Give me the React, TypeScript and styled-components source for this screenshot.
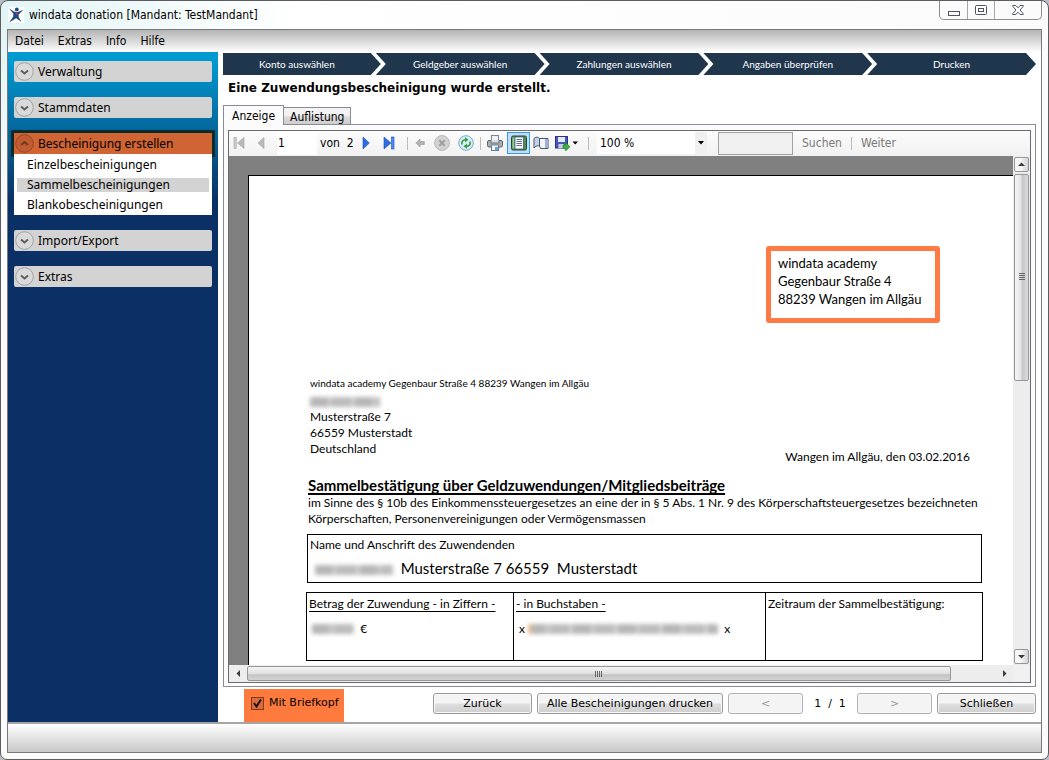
import React from "react";
import styled, { createGlobalStyle, css } from "styled-components";

const UI = '"DejaVu Sans Condensed", "DejaVu Sans", sans-serif';
const FORM = '"DejaVu Sans", sans-serif';
const DOC = 'Lato, "Open Sans", sans-serif';
const NAV = '"Noto Sans", "Open Sans", sans-serif';

const GlobalStyle = createGlobalStyle`
  *, *::before, *::after { box-sizing: border-box; }
  body { margin: 0; background: #b9bcc4; color: #000; }
  button, input, select { font: inherit; color: inherit; margin: 0; padding: 0; border: 0; background: none; border-radius: 0; }
  h1, h2, p, ul { margin: 0; padding: 0; }
  ul { list-style: none; }
  svg { display: block; flex: none; }
`;

const Window = styled.div`
  display: flex;
  flex-direction: column;
  height: 100vh;
  min-height: 480px;
  padding: 0 6px 6px;
  border: 1px solid #5c5c60;
  border-radius: 8px 8px 7px 7px;
  background:
    linear-gradient(transparent 28px, #fbfbfb 220px),
    linear-gradient(90deg, #e2f5f5 0, #f4fbfb 180px, #fff 300px, #fbfbfb 100%);
  font: 12px/16px ${UI};
`;

const TitleBar = styled.header`
  display: flex;
  align-items: flex-start;
  height: 28px;
  flex: none;
`;

const TitleLabel = styled.div`
  display: flex;
  align-items: center;
  gap: 5px;
  flex: 1;
  height: 27px;
  padding-left: 1px;
`;

const WindowButtons = styled.div`
  display: flex;
  height: 19px;
  border: 1px solid #8b8b90;
  border-top: 0;
  border-radius: 0 0 5px 5px;
`;

const WindowButton = styled.button<{ $wide?: boolean }>`
  display: flex;
  align-items: center;
  justify-content: center;
  width: ${(p) => (p.$wide ? 47 : 27)}px;
  & + & { border-left: 1px solid #a5a5aa; }
`;

const Client = styled.div`
  display: flex;
  flex-direction: column;
  flex: 1;
  min-height: 0;
  border: 1px solid #77797b;
  background: #fff;
`;

const MenuBar = styled.nav`
  display: flex;
  align-items: center;
  gap: 14px;
  height: 22px;
  flex: none;
  padding-left: 7px;
  background: linear-gradient(#b4b4b4, #dcdcdc 55%, #fff);
`;

const MenuItem = styled.button``;

const Body = styled.div`
  display: flex;
  flex: 1;
  min-height: 0;
`;

const Sidebar = styled.aside`
  display: flex;
  flex-direction: column;
  gap: 15px;
  width: 210px;
  flex: none;
  padding: 9px 6px;
  background: linear-gradient(#0099d0 0, #0099d0 10px, #0a3066 150px);
  font: 12px/20px ${NAV};
`;

const GroupHeader = styled.button<{ $open?: boolean }>`
  display: flex;
  align-items: center;
  gap: 4px;
  width: 100%;
  height: 21px;
  padding-left: 1px;
  border-radius: 2px;
  background: #d3d3d3;
  text-align: left;
  ${(p) =>
    p.$open &&
    css`
      background: #d06433;
      border-radius: 0;
      box-shadow: 0 0 0 3px #0b2a2a;
    `}
`;

const GroupList = styled.ul`
  position: relative;
  padding: 1px 3px 0;
  background: #fff;
`;

const GroupItem = styled.li`
  display: flex;
  align-items: center;
  height: 20px;
`;

const GroupLink = styled.a<{ $active?: boolean }>`
  flex: 1;
  padding-left: 10px;
  line-height: 14px;
  color: #000;
  text-decoration: none;
  background: ${(p) => (p.$active ? "#d3d3d3" : "none")};
`;

const Main = styled.main`
  display: flex;
  flex-direction: column;
  flex: 1;
  min-width: 0;
  padding: 0 5px;
`;

const Steps = styled.ol`
  display: flex;
  flex: none;
  margin: 1px 0 0;
  padding: 0;
  list-style: none;
  font: 10px/22px ${DOC};
`;

const Step = styled.li`
  flex: 1 1 21px;
  background: #1f364c;
  color: #fff;
  text-align: center;
  clip-path: polygon(0 0, calc(100% - 10px) 0, 100% 50%, calc(100% - 10px) 100%, 0 100%, 10px 50%);
  &:first-child {
    flex-basis: 10px;
    padding-right: 10px;
    clip-path: polygon(0 0, calc(100% - 10px) 0, 100% 50%, calc(100% - 10px) 100%, 0 100%);
  }
  & + & { margin-left: -5px; }
`;

const Message = styled.h1`
  flex: none;
  padding: 3px 5px 7px;
  font: bold 12px/20px ${FORM};
`;

const Tabs = styled.div`
  display: flex;
  align-items: flex-end;
  height: 19px;
  flex: none;
`;

const Tab = styled.button<{ $active?: boolean }>`
  height: 17px;
  padding: 2px 6px 0;
  border: 1px solid #898c95;
  border-bottom: 0;
  line-height: 14px;
  background: linear-gradient(#f3f3f3 45%, #dcdcdc 55%, #cdcdcd);
  ${(p) =>
    p.$active
      ? css`
          position: relative;
          height: 20px;
          padding: 0 8px;
          margin-bottom: -1px;
          background: #fbfbfb;
        `
      : css`border-left: 0;`}
`;

const TabPanel = styled.section`
  display: flex;
  flex: 1;
  min-height: 0;
  padding: 5px 4px 3px;
  border: 1px solid #898c95;
  background: #fbfbfb;
`;

const Viewer = styled.div`
  display: flex;
  flex-direction: column;
  flex: 1;
  min-width: 0;
  border: 1px solid #6b6b6b;
`;

const Toolbar = styled.div`
  display: flex;
  align-items: center;
  height: 25px;
  padding-bottom: 1px;
  flex: none;
  background: linear-gradient(#fcfcfc, #f1f1f1);
`;

const Tool = styled.button<{ $w: number; $active?: boolean }>`
  display: flex;
  align-items: center;
  justify-content: center;
  width: ${(p) => p.$w}px;
  height: 22px;
  flex: none;
  ${(p) =>
    p.$active &&
    css`
      margin-left: 4px;
      border: 1px solid #3399ff;
      background: #c3defa;
    `}
`;

const Separator = styled.span`
  width: 1px;
  height: 13px;
  margin: 0 6px;
  flex: none;
  background: #bcbcbc;
`;

const PageInput = styled.input`
  width: 40px;
  height: 23px;
  margin-left: 4px;
  padding-left: 1px;
  background: #fff;
`;

const PageCount = styled.span`
  width: 38px;
  padding-left: 3px;
  white-space: pre;
`;

const ZoomBox = styled.div`
  display: flex;
  position: relative;
  width: 110px;
  height: 22px;
  margin-left: 2px;
  background: linear-gradient(90deg, #fff 98px, #f0f0f0 98px);
`;

const ZoomSelect = styled.select`
  appearance: none;
  width: 100%;
  padding-left: 3px;
`;

const ZoomArrow = styled.svg`
  position: absolute;
  right: 3px;
  top: 9px;
  pointer-events: none;
`;

const SearchInput = styled.input`
  width: 75px;
  height: 23px;
  margin-left: 11px;
  padding: 0 4px;
  border: 1px solid #a2a2a2;
  background: #f0f0f0;
`;

const SearchButton = styled.button`
  margin: 0 3px 0 9px;
  color: #7a7a7a;
  & + span + & { margin-left: 3px; }
`;

const Scroller = styled.div`
  display: grid;
  grid-template: minmax(0, 1fr) 17px / minmax(0, 1fr) 17px;
  flex: 1;
  min-height: 0;
  background: #f0f0f0;
`;

const Viewport = styled.div`
  overflow: hidden;
  padding: 19px 0 0 19px;
  background: #808080;
`;

const VTrack = styled.div`
  display: flex;
  flex-direction: column;
  padding: 1px;
  gap: 2px;
  background: #ededed;
`;

const HTrack = styled.div`
  display: flex;
  padding: 1px 0;
  background: #ededed;
`;

const ScrollButton = styled.button<{ $flat?: boolean }>`
  display: flex;
  align-items: center;
  justify-content: center;
  width: ${(p) => (p.$flat ? 18 : 15)}px;
  height: 15px;
  flex: none;
  border: ${(p) => (p.$flat ? "0" : "1px solid #979797")};
  border-radius: 2px;
  background: ${(p) => (p.$flat ? "#ededed" : "linear-gradient(90deg, #f6f6f6 45%, #d2d2d6)")};
`;

const VThumb = styled.div`
  display: flex;
  align-items: center;
  justify-content: center;
  flex: 206;
  border: 1px solid #979797;
  border-radius: 2px;
  background: linear-gradient(90deg, #f5f5f5 0, #e4e4e6 45%, #c6c6ca 55%, #dcdcde);
`;

const HThumb = styled.div`
  display: flex;
  align-items: center;
  justify-content: center;
  flex: 704;
  border: 1px solid #979797;
  border-radius: 2px;
  background: linear-gradient(#f5f5f5 0, #e0e0e0 50%, #c4c4c4 60%, #d2d2d2);
`;

const Rest = styled.div<{ $grow: number }>`
  flex: ${(p) => p.$grow};
`;

const Paper = styled.article`
  width: 794px;
  min-height: 1123px;
  padding: 70px 59px 60px 57px;
  border: 1px solid #000;
  border-right: 0;
  background: #fff;
  font: 12px/16px ${DOC};
`;

const Letterhead = styled.address`
  width: 174px;
  height: 77px;
  margin: 0 43px 52px auto;
  padding: 3px 0 0 7px;
  border: 5px solid #ff7b43;
  border-radius: 3px;
  font: normal 13px/18px ${DOC};
  white-space: nowrap;
`;

const AddressRow = styled.div`
  display: flex;
  align-items: flex-end;
  justify-content: space-between;
  padding: 0 13px 0 4px;
`;

const Recipient = styled.div`
  padding-bottom: 8px;
`;

const SenderLine = styled.p`
  margin-bottom: 2px;
  font-size: 10px;
`;

const Line = styled.p<{ $indent?: boolean; $big?: boolean }>`
  white-space: pre;
  ${(p) => p.$indent && css`padding-left: 2px;`}
  ${(p) => p.$big && css`font-size: 15px; line-height: 20px;`}
`;

const Redacted = styled.span<{ $w: number; $warm?: boolean }>`
  display: inline-block;
  width: ${(p) => p.$w}px;
  height: 10px;
  vertical-align: middle;
  background: repeating-linear-gradient(90deg, #b6b6b6 0 17px, #c8c8c8 17px 22px, #bcbcbc 22px 41px, #d0d0d0 41px 45px);
  ${(p) => p.$warm && css`box-shadow: inset 3px 0 0 #f5bd7c;`}
  filter: blur(2px);
`;

const DocTitle = styled.h2`
  margin-top: 10px;
  padding-left: 2px;
  font: bold 15px/20px ${DOC};
  text-decoration: underline;
  text-decoration-thickness: 2px;
  text-underline-offset: 2px;
  text-decoration-skip-ink: none;
`;

const NameBox = styled.div`
  height: 49px;
  margin: 7px 1px 9px;
  padding: 2px;
  border: 1px solid #000;
`;

const NameLine = styled(Line)`
  padding: 5px 0 0 5px;
`;

const Amounts = styled.table`
  width: 100%;
  table-layout: fixed;
  border-collapse: collapse;
  font-size: 12px;
`;

const AmountHead = styled.th<{ $plain?: boolean; $w?: number }>`
  width: ${(p) => (p.$w ? `${p.$w}px` : "auto")};
  height: 22px;
  padding: 0 0 0 2px;
  border: 1px solid #000;
  border-bottom: 0;
  font-weight: normal;
  text-align: left;
  text-decoration: ${(p) => (p.$plain ? "none" : "underline")};
  text-underline-offset: 3px;
  text-decoration-skip-ink: none;
  white-space: nowrap;
`;

const AmountCell = styled.td`
  height: 46px;
  padding: 6px 5px 0;
  border: 1px solid #000;
  border-top: 0;
  vertical-align: top;
  white-space: pre;
`;

const Footer = styled.footer`
  display: flex;
  align-items: center;
  gap: 5px;
  height: 35px;
  flex: none;
  font: 11px/16px ${FORM};
`;

const CheckLabel = styled.label`
  display: flex;
  align-items: center;
  align-self: flex-end;
  gap: 5px;
  height: 33px;
  margin: 0 auto 0 21px;
  padding: 0 5px 5px 7px;
  background: #ff7b3d;
`;

const CheckBox = styled.input`
  appearance: none;
  width: 13px;
  height: 13px;
  border: 1px solid #7d3a1c;
  background: #dc6c3a;
  &:checked {
    background: #dc6c3a url("data:image/svg+xml,%3Csvg xmlns='http://www.w3.org/2000/svg' viewBox='0 0 11 11'%3E%3Cpath d='M2 5l2.5 3.500L9 1.500' fill='none' stroke='%23201020' stroke-width='2'/%3E%3C/svg%3E") center / 11px 11px no-repeat;
  }
`;

const FormButton = styled.button<{ $w: number }>`
  width: ${(p) => p.$w}px;
  height: 21px;
  padding-top: 1px;
  margin-bottom: 3px;
  flex: none;
  border: 1px solid #9a9a9a;
  border-radius: 3px;
  background: linear-gradient(#f4f4f4 45%, #dedede 55%, #cfcfcf);
  box-shadow: inset 0 0 0 1px #f8f8f8;
  line-height: 18px;
  white-space: nowrap;
  &:disabled {
    border-color: #adb2b5;
    background: #f4f4f4;
    color: #9a9a9a;
  }
`;

const Counter = styled.span`
  width: 44px;
  margin-bottom: 2px;
  text-align: center;
  white-space: pre;
`;

const StatusBar = styled.div`
  height: 30px;
  flex: none;
  border-top: 2px solid #a5a5a5;
  background: linear-gradient(#fff, #c8c8c8);
`;

const Logo = () => (
  <svg width="16" height="16" viewBox="0 0 16 16" aria-hidden="true">
    <rect width="16" height="16" fill="#fff" />
    <path d="M.8 1.200L6.300 4.800 9.800 5 15.500 2.800 10.600 7.400 10.800 10.200 13.500 15 8.200 11.200 1 15.500 5.200 9.800 5.300 6.600z" fill="#1f4a80" />
    <circle cx="8.800" cy="2.400" r="1.900" fill="#1f4a80" />
    <circle cx="8.600" cy="6.600" r="1.100" fill="#e0314a" />
  </svg>
);

const Chevron = ({ up }: { up?: boolean }) => (
  <svg width="19" height="19" viewBox="0 0 19 19" aria-hidden="true">
    <circle cx="9.500" cy="9.500" r="8.800" fill={up ? "#c25c30" : "#dadada"} stroke={up ? "#8f4a2b" : "#a3a3a3"} />
    <path d={up ? "M6 11l3.500-3 3.500 3" : "M6 8.500l3.500 3 3.500-3"} fill="none" stroke={up ? "#6a3a26" : "#5e5e5e"} strokeWidth="2" />
  </svg>
);

const BLUE = "#2f6be0";
const GREY = "#b9b9b9";

const SkipIcon = ({ end }: { end?: boolean }) => (
  <svg width="12" height="14" viewBox="0 0 12 14" aria-hidden="true">
    {end ? (
      <>
        <path d="M1 1l7 6-7 6z" fill={BLUE} stroke="#1c4fb5" strokeWidth=".6" />
        <rect x="8.500" y="1" width="2.500" height="12" fill="#4f88ee" stroke="#1c4fb5" strokeWidth=".6" />
      </>
    ) : (
      <>
        <path d="M11 1.500L4.500 7l6.500 5.500z" fill={GREY} stroke="#a2a2a2" strokeWidth=".6" />
        <rect x="1" y="1.500" width="2.200" height="11" fill="#cacaca" stroke="#a2a2a2" strokeWidth=".6" />
      </>
    )}
  </svg>
);

const PlayIcon = ({ back }: { back?: boolean }) => (
  <svg width="8" height="14" viewBox="0 0 8 14" aria-hidden="true">
    {back ? (
      <path d="M7 1.500L1 7l6 5.500z" fill={GREY} stroke="#a2a2a2" strokeWidth=".6" />
    ) : (
      <path d="M1 1l6.300 6L1 13z" fill={BLUE} stroke="#1c4fb5" strokeWidth=".6" />
    )}
  </svg>
);

const BackIcon = () => (
  <svg width="10" height="10" viewBox="0 0 10 10" aria-hidden="true">
    <path d="M.8 5L5 1v2.500h4.300v3H5V9z" fill="#b2b2b2" stroke="#999" strokeWidth=".6" />
  </svg>
);

const StopIcon = () => (
  <svg width="16" height="16" viewBox="0 0 16 16" aria-hidden="true">
    <circle cx="8" cy="8" r="7.400" fill="#d2d2d2" stroke="#b8b8b8" />
    <path d="M5.300 5.300l5.400 5.400M10.700 5.300l-5.400 5.400" stroke="#a0a0a0" strokeWidth="2.200" />
  </svg>
);

const RefreshIcon = () => (
  <svg width="16" height="16" viewBox="0 0 16 16" aria-hidden="true">
    <circle cx="8" cy="8" r="7.300" fill="#d8ecf9" stroke="#78a8d4" />
    <path d="M4 9.500C3.200 6.500 5 4.700 7.500 4.700M12 6.500c.8 3-1 4.800-3.500 4.800" fill="none" stroke="#2f9e3b" strokeWidth="1.600" />
    <path d="M7 2.200l3.500 2.500L7 7.200zM9 8.800v5l-3.500-2.500z" fill="#2f9e3b" />
  </svg>
);

const PrintIcon = () => (
  <svg width="16" height="16" viewBox="0 0 16 16" aria-hidden="true">
    <rect x="4.500" y=".5" width="7" height="6" fill="#eef2f6" stroke="#7d8794" />
    <rect x=".5" y="5.500" width="15" height="6.500" rx="1.500" fill="#a9aeb4" stroke="#5f656c" />
    <path d="M4 5v3h8V5" fill="#d9dde1" stroke="#5f656c" strokeWidth=".8" />
    <rect x="4.500" y="10" width="7" height="5.500" fill="#f5f8fb" stroke="#737b85" />
    <path d="M8 12h3v3H8z" fill="#5aa6dc" />
  </svg>
);

const LayoutIcon = () => (
  <svg width="16" height="16" viewBox="0 0 16 16" aria-hidden="true">
    <rect x=".5" y="1" width="15" height="14" rx="1.500" fill="#4f8f57" stroke="#1e4d2a" />
    <path d="M1.500 3l2-1v12l-2-1z" fill="#9cc7a0" />
    <rect x="4" y="2" width="8.500" height="12" fill="#fff" stroke="#41556f" strokeWidth=".8" />
    <path d="M5.500 4.500h5.500M5.500 6.500h5.500M5.500 8.500h5.500M5.500 10.500h5.500" stroke="#5c6f8e" />
  </svg>
);

const SetupIcon = () => (
  <svg width="16" height="14" viewBox="0 0 16 14" aria-hidden="true">
    <path d="M1 12V2.500C2.500 1 5 .5 6.500 2.500v7.500C5 9 3 10 1 12z" fill="#c3d1e8" stroke="#4c5666" />
    <path d="M6.500 2.500h8.500v10H7.500L6.500 10z" fill="#f1f6fd" stroke="#4c5666" />
    <path d="M12 3h2.500v9H12z" fill="#9db2d6" />
  </svg>
);

const SaveIcon = () => (
  <svg width="24" height="16" viewBox="0 0 24 16" aria-hidden="true">
    <rect x=".5" y="1.500" width="12" height="11.500" fill="#4b56b8" stroke="#2b347f" />
    <rect x="3" y="2" width="7" height="5" fill="#e4e8f6" />
    <rect x="3.500" y="9" width="5.500" height="4" fill="#c9cde4" />
    <path d="M8 10h2.500V7.500L15 11.700 10.500 16v-2.500H8z" fill="#3fb13f" stroke="#1f8022" strokeWidth=".6" />
    <path d="M17.500 6.500h5.500l-2.800 3z" fill="#000" />
  </svg>
);

const Arrow = ({ d }: { d: string }) => (
  <svg width="7" height="7" viewBox="0 0 7 7" aria-hidden="true">
    <path d={d} fill="#3c3c3c" />
  </svg>
);

const Grip = ({ vertical }: { vertical?: boolean }) => (
  <svg width="8" height="8" viewBox="0 0 8 8" aria-hidden="true">
    <path d={vertical ? "M1 .5h6M1 2.500h6M1 4.500h6M1 6.500h6" : "M.5 1v6M2.500 1v6M4.500 1v6M6.500 1v6"} stroke="#666" />
  </svg>
);

const GROUPS: { name: string; items?: string[] }[] = [
  { name: "Verwaltung" },
  { name: "Stammdaten" },
  {
    name: "Bescheinigung erstellen",
    items: ["Einzelbescheinigungen", "Sammelbescheinigungen", "Blankobescheinigungen"],
  },
  { name: "Import/Export" },
  { name: "Extras" },
];

const STEPS = ["Konto auswählen", "Geldgeber auswählen", "Zahlungen auswählen", "Angaben überprüfen", "Drucken"];

export default function App() {
  return (
    <>
      <GlobalStyle />
      <Window>
        <TitleBar>
          <TitleLabel>
            <Logo />
            windata donation [Mandant: TestMandant]
          </TitleLabel>
          <WindowButtons>
            <WindowButton aria-label="Minimieren">
              <svg width="12" height="12" viewBox="0 0 12 12">
                <rect x=".5" y="7.500" width="11" height="4" fill="#fff" stroke="#50506a" />
              </svg>
            </WindowButton>
            <WindowButton aria-label="Maximieren">
              <svg width="12" height="10" viewBox="0 0 12 10">
                <rect x=".5" y=".5" width="11" height="9" rx="1" fill="#fff" stroke="#50506a" />
                <rect x="3.500" y="3.500" width="5" height="3" fill="#fff" stroke="#50506a" />
              </svg>
            </WindowButton>
            <WindowButton $wide aria-label="Fenster schließen">
              <svg width="12" height="10" viewBox="0 0 12 10">
                <path d="M.8.5h3L6 2.800 8.200.5h3v1L8 5l3.200 3.500v1h-3L6 7.200 3.800 9.500h-3v-1L4 5 .8 1.500z" fill="#fff" stroke="#50506a" />
              </svg>
            </WindowButton>
          </WindowButtons>
        </TitleBar>

        <Client>
          <MenuBar>
            {["Datei", "Extras", "Info", "Hilfe"].map((m) => (
              <MenuItem key={m}>{m}</MenuItem>
            ))}
          </MenuBar>

          <Body>
            <Sidebar>
              {GROUPS.map((g) => (
                <div key={g.name}>
                  <GroupHeader $open={!!g.items}>
                    <Chevron up={!!g.items} />
                    {g.name}
                  </GroupHeader>
                  {g.items && (
                    <GroupList>
                      {g.items.map((item) => (
                        <GroupItem key={item}>
                          <GroupLink href="#" $active={item === "Sammelbescheinigungen"}>
                            {item}
                          </GroupLink>
                        </GroupItem>
                      ))}
                    </GroupList>
                  )}
                </div>
              ))}
            </Sidebar>

            <Main>
              <Steps>
                {STEPS.map((s) => (
                  <Step key={s}>{s}</Step>
                ))}
              </Steps>
              <Message>Eine Zuwendungsbescheinigung wurde erstellt.</Message>
              <Tabs>
                <Tab $active>Anzeige</Tab>
                <Tab>Auflistung</Tab>
              </Tabs>

              <TabPanel>
                <Viewer>
                  <Toolbar>
                    <Tool $w={19} aria-label="Erste Seite"><SkipIcon /></Tool>
                    <Tool $w={25} aria-label="Vorherige Seite"><PlayIcon back /></Tool>
                    <PageInput aria-label="Seite" defaultValue="1" />
                    <PageCount>{"von  2"}</PageCount>
                    <Tool $w={22} aria-label="Nächste Seite"><PlayIcon /></Tool>
                    <Tool $w={24} aria-label="Letzte Seite"><SkipIcon end /></Tool>
                    <Separator />
                    <Tool $w={12} aria-label="Zurück"><BackIcon /></Tool>
                    <Tool $w={32} aria-label="Abbrechen"><StopIcon /></Tool>
                    <Tool $w={16} aria-label="Aktualisieren"><RefreshIcon /></Tool>
                    <Separator />
                    <Tool $w={16} aria-label="Drucken"><PrintIcon /></Tool>
                    <Tool $w={23} $active aria-label="Seitenlayout"><LayoutIcon /></Tool>
                    <Tool $w={22} aria-label="Seite einrichten"><SetupIcon /></Tool>
                    <Tool $w={30} aria-label="Exportieren"><SaveIcon /></Tool>
                    <Separator />
                    <ZoomBox>
                      <ZoomSelect aria-label="Zoom" defaultValue="100">
                        <option value="100">100 %</option>
                      </ZoomSelect>
                      <ZoomArrow width="6" height="4" viewBox="0 0 6 4">
                        <path d="M0 0h6L3 3.500z" />
                      </ZoomArrow>
                    </ZoomBox>
                    <SearchInput aria-label="Suchtext" />
                    <SearchButton>Suchen</SearchButton>
                    <Separator />
                    <SearchButton>Weiter</SearchButton>
                  </Toolbar>

                  <Scroller>
                    <Viewport>
                      <Paper>
                        <Letterhead>
                          windata academy
                          <br />
                          Gegenbaur Straße 4
                          <br />
                          88239 Wangen im Allgäu
                        </Letterhead>
                        <AddressRow>
                          <Recipient>
                            <SenderLine>windata academy Gegenbaur Straße 4 88239 Wangen im Allgäu</SenderLine>
                            <Line><Redacted $w={70} /></Line>
                            <Line>Musterstraße 7</Line>
                            <Line>66559 Musterstadt</Line>
                            <Line>Deutschland</Line>
                          </Recipient>
                          <Line>Wangen im Allgäu, den 03.02.2016</Line>
                        </AddressRow>
                        <DocTitle>Sammelbestätigung über Geldzuwendungen/Mitgliedsbeiträge</DocTitle>
                        <Line $indent>
                          im Sinne des § 10b des Einkommenssteuergesetzes an eine der in § 5 Abs. 1 Nr. 9 des Körperschaftsteuergesetzes bezeichneten
                        </Line>
                        <Line $indent>Körperschaften, Personenvereinigungen oder Vermögensmassen</Line>
                        <NameBox>
                          <Line>Name und Anschrift des Zuwendenden</Line>
                          <NameLine $big>
                            <Redacted $w={78} />
                            {"  Musterstraße 7 66559  Musterstadt"}
                          </NameLine>
                        </NameBox>
                        <Amounts>
                          <thead>
                            <tr>
                              <AmountHead $w={207}>Betrag der Zuwendung - in Ziffern -</AmountHead>
                              <AmountHead $w={252}>- in Buchstaben -</AmountHead>
                              <AmountHead $plain>Zeitraum der Sammelbestätigung:</AmountHead>
                            </tr>
                          </thead>
                          <tbody>
                            <tr>
                              <AmountCell><Redacted $w={42} />{"  €"}</AmountCell>
                              <AmountCell>{"x "}<Redacted $w={190} $warm />{"  x"}</AmountCell>
                              <AmountCell />
                            </tr>
                          </tbody>
                        </Amounts>
                      </Paper>
                    </Viewport>
                    <VTrack>
                      <ScrollButton aria-label="Nach oben"><Arrow d="M0 5h7L3.500 1.500z" /></ScrollButton>
                      <VThumb><Grip vertical /></VThumb>
                      <Rest $grow={266} />
                      <ScrollButton aria-label="Nach unten"><Arrow d="M0 2h7L3.500 5.500z" /></ScrollButton>
                    </VTrack>
                    <HTrack>
                      <ScrollButton $flat aria-label="Nach links"><Arrow d="M5 0v7L1.500 3.500z" /></ScrollButton>
                      <HThumb><Grip /></HThumb>
                      <Rest $grow={44} />
                      <ScrollButton $flat aria-label="Nach rechts"><Arrow d="M2 0v7l3.500-3.500z" /></ScrollButton>
                    </HTrack>
                  </Scroller>
                </Viewer>
              </TabPanel>

              <Footer>
                <CheckLabel>
                  <CheckBox type="checkbox" defaultChecked />
                  Mit Briefkopf
                </CheckLabel>
                <FormButton $w={99}>Zurück</FormButton>
                <FormButton $w={186}>Alle Bescheinigungen drucken</FormButton>
                <FormButton $w={75} disabled>&lt;</FormButton>
                <Counter>1  /  1</Counter>
                <FormButton $w={75} disabled>&gt;</FormButton>
                <FormButton $w={99}>Schließen</FormButton>
              </Footer>
            </Main>
          </Body>
          <StatusBar />
        </Client>
      </Window>
    </>
  );
}
